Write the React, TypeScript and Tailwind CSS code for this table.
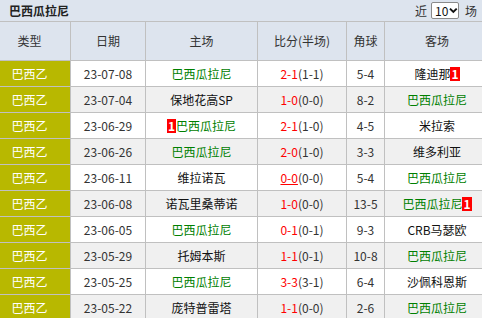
import React from 'react';

type Row = {
  date: string;
  home: string;
  homeMark?: boolean;
  homeBadge?: boolean;
  score: string;
  half: string;
  underline?: boolean;
  corner: string;
  away: string;
  awayMark?: boolean;
  awayBadge?: boolean;
};

const rows: Row[] = [
  { date: '23-07-08', home: '巴西瓜拉尼', homeMark: true, score: '2-1', half: '(1-1)', corner: '5-4', away: '隆迪那', awayBadge: true },
  { date: '23-07-04', home: '保地花高SP', score: '1-0', half: '(0-0)', corner: '8-2', away: '巴西瓜拉尼', awayMark: true },
  { date: '23-06-29', home: '巴西瓜拉尼', homeMark: true, homeBadge: true, score: '2-1', half: '(1-0)', corner: '4-5', away: '米拉索' },
  { date: '23-06-26', home: '巴西瓜拉尼', homeMark: true, score: '2-0', half: '(1-0)', corner: '3-3', away: '维多利亚' },
  { date: '23-06-11', home: '维拉诺瓦', score: '0-0', half: '(0-0)', underline: true, corner: '5-4', away: '巴西瓜拉尼', awayMark: true },
  { date: '23-06-08', home: '诺瓦里桑蒂诺', score: '1-0', half: '(0-0)', corner: '13-5', away: '巴西瓜拉尼', awayMark: true, awayBadge: true },
  { date: '23-06-05', home: '巴西瓜拉尼', homeMark: true, score: '0-1', half: '(0-1)', corner: '9-3', away: 'CRB马瑟欧' },
  { date: '23-05-29', home: '托姆本斯', score: '1-1', half: '(0-1)', corner: '10-8', away: '巴西瓜拉尼', awayMark: true },
  { date: '23-05-25', home: '巴西瓜拉尼', homeMark: true, score: '3-3', half: '(3-1)', corner: '6-4', away: '沙佩科恩斯' },
  { date: '23-05-22', home: '庞特普雷塔', score: '1-1', half: '(0-0)', corner: '2-6', away: '巴西瓜拉尼', awayMark: true },
];

const Badge = () => (
  <span className="inline-block bg-[#ff0000] text-white font-bold text-[12px] leading-[14px] px-[1px]">1</span>
);

const cols = 'grid grid-cols-[71px_75px_112px_89px_38px_104px]';
const cell = 'flex items-center justify-center border-r border-[#c0c0c0]';

export default function App() {
  return (
    <div
      className="w-[482px] h-[318px] overflow-hidden bg-white text-[12px] leading-[16px] text-[#333]"
      style={{ fontFamily: '"Noto Sans CJK SC", "Liberation Sans", sans-serif' }}
    >
      <div className="w-[489px]">
        {/* title bar */}
        <div className="h-[22px] w-[482px] bg-[#dde4ee] border-b border-[#c0c0c0] flex items-center justify-between pl-[9px] pr-[5px]">
          <span className="font-bold text-[#222]">巴西瓜拉尼</span>
          <div className="flex items-center gap-[4px] text-[#333]">
            <span>近</span>
            <div className="h-[17px] w-[28px] bg-white border border-[#8a8a8a] rounded-[2px] flex items-center pl-[3px] text-[12px] text-[#111]">
              <span>10</span>
              <svg width="9" height="7" viewBox="0 0 9 7" className="ml-[1px]">
                <path d="M1 1.5 L4.5 5 L8 1.5" stroke="#111" strokeWidth="2" fill="none" />
              </svg>
            </div>
            <span className="ml-[2px]">场</span>
          </div>
        </div>

        {/* header */}
        <div className={`${cols} h-[39px] bg-[#dde4ee] border-b border-[#c0c0c0] text-[#333]`}>
          <div className={`${cell} pr-[11px]`}>类型</div>
          <div className={cell}>日期</div>
          <div className={cell}>主场</div>
          <div className={cell}>比分(半场)</div>
          <div className={cell}>角球</div>
          <div className="flex items-center justify-center">客场</div>
        </div>

        {rows.map((r, i) => (
          <div
            key={i}
            className={`${cols} h-[26px] border-b border-[#c0c0c0] ${i % 2 === 1 ? 'bg-[#f0f0f0]' : 'bg-white'}`}
          >
            <div className={`${cell} pr-[11px] bg-[#b8b800] text-white`}>巴西乙</div>
            <div className={cell}>{r.date}</div>
            <div className={`${cell} ${r.homeMark ? 'text-[#008000]' : 'text-[#111]'}`}>
              {r.homeBadge && <Badge />}
              <span>{r.home}</span>
            </div>
            <div className={cell}>
              <span className={`text-[#ff0000] ${r.underline ? 'underline' : ''}`}>{r.score}</span>
              <span>{r.half}</span>
            </div>
            <div className={cell}>{r.corner}</div>
            <div className={`flex items-center justify-center ${r.awayMark ? 'text-[#008000]' : 'text-[#111]'}`}>
              <span>{r.away}</span>
              {r.awayBadge && <Badge />}
            </div>
          </div>
        ))}
      </div>
    </div>
  );
}
